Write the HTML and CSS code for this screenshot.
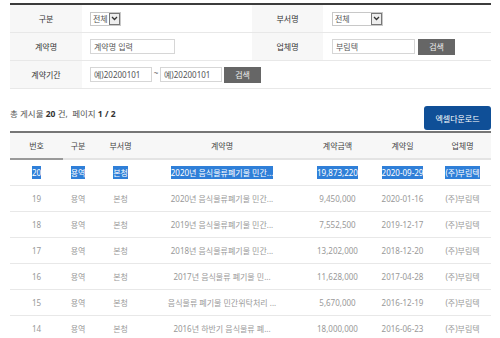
FILE: index.html
```html
<!DOCTYPE html>
<html lang="ko">
<head>
  <meta charset="UTF-8">
  <title>계약현황</title>
  <link rel="stylesheet" href="styles.css">
</head>
<body>
  <div id="contract-board">
    <table class="search">
      <colgroup>
        <col style="width:72px"><col style="width:170px"><col style="width:71px"><col style="width:168px">
      </colgroup>
      <tr>
        <th>구분</th>
        <td><span class="sel sel-s"><span class="sel-txt">전체</span><span class="sel-arr"><svg width="7" height="5" viewBox="0 0 7 5"><path d="M1 1 L3.5 3.5 L6 1" fill="none" stroke="#333" stroke-width="1.3"/></svg></span></span></td>
        <th>부서명</th>
        <td class="pad9"><span class="sel sel-l"><span class="sel-txt">전체</span><span class="sel-arr"><svg width="7" height="5" viewBox="0 0 7 5"><path d="M1 1 L3.5 3.5 L6 1" fill="none" stroke="#333" stroke-width="1.3"/></svg></span></span></td>
      </tr>
      <tr>
        <th>계약명</th>
        <td><input class="inp inp-name" type="text" value="계약명 입력"></td>
        <th>업체명</th>
        <td class="pad9"><input class="inp inp-comp" type="text" value="부림텍"><button class="btn-search">검색</button></td>
      </tr>
      <tr>
        <th>계약기간</th>
        <td colspan="3"><input class="inp inp-date" type="text" value="예)20200101"><span class="tilde">~</span><input class="inp inp-date" type="text" value="예)20200101"><button class="btn-search btn-date">검색</button></td>
      </tr>
    </table>

    <div class="list-top">
      <p class="count">총 게시물 <b>20</b> 건,&nbsp; 페이지 <b>1 / 2</b></p>
      <button class="btn-excel">엑셀다운로드</button>
    </div>

    <table class="list">
      <colgroup>
        <col style="width:53px"><col style="width:38px"><col style="width:39px"><col style="width:164px"><col style="width:67px"><col style="width:63px"><col style="width:57px">
      </colgroup>
      <thead>
        <tr>
          <th class="on">번호</th><th class="c2">구분</th><th>부서명</th><th>계약명</th><th>계약금액</th><th>계약일</th><th>업체명</th>
        </tr>
      </thead>
      <tbody>
        <tr class="picked">
          <td><span>20</span></td><td class="c2"><span>용역</span></td><td><span>본청</span></td><td><span>2020년 음식물류폐기물 민간...</span></td><td><span>19,873,220</span></td><td><span>2020-09-29</span></td><td><span>(주)부림텍</span></td>
        </tr>
        <tr>
          <td>19</td><td class="c2">용역</td><td>본청</td><td>2020년 음식물류폐기물 민간...</td><td>9,450,000</td><td>2020-01-16</td><td>(주)부림텍</td>
        </tr>
        <tr>
          <td>18</td><td class="c2">용역</td><td>본청</td><td>2019년 음식물류폐기물 민간...</td><td>7,552,500</td><td>2019-12-17</td><td>(주)부림텍</td>
        </tr>
        <tr>
          <td>17</td><td class="c2">용역</td><td>본청</td><td>2018년 음식물류폐기물 민간...</td><td>13,202,000</td><td>2018-12-20</td><td>(주)부림텍</td>
        </tr>
        <tr>
          <td>16</td><td class="c2">용역</td><td>본청</td><td>2017년 음식물류 폐기물 민...</td><td>11,628,000</td><td>2017-04-28</td><td>(주)부림텍</td>
        </tr>
        <tr>
          <td>15</td><td class="c2">용역</td><td>본청</td><td>음식물류 폐기물 민간위탁처리 ...</td><td>5,670,000</td><td>2016-12-19</td><td>(주)부림텍</td>
        </tr>
        <tr>
          <td>14</td><td class="c2">용역</td><td>본청</td><td>2016년 하반기 음식물류 폐...</td><td>18,000,000</td><td>2016-06-23</td><td>(주)부림텍</td>
        </tr>
      </tbody>
    </table>
  </div>
</body>
</html>
```

FILE: styles.css
```css
body {
    margin: 0;
    padding: 3px 9px 0 10px;
    font-family: "Noto Sans", "Noto Sans CJK KR", sans-serif;
    font-size: 8px;
    color: #555;
    background: #fff;
}
#contract-board {
    width: 481px;
}
table {
    border-collapse: collapse;
    table-layout: fixed;
    width: 481px;
}
.search {
    border-top: 2px solid #3c3c3c;
}
.search th {
    height: 27px;
    padding: 0;
    background: #f7f7f7;
    font-weight: normal;
    color: #333;
    border-bottom: 1px solid #e8e8e8;
}
.search td {
    padding: 0 0 0 8px;
    border-bottom: 1px solid #e8e8e8;
    white-space: nowrap;
}
.search td.pad9 {
    padding-left: 9px;
}
.sel {
    display: inline-flex;
    align-items: center;
    height: 14px;
    box-sizing: border-box;
    border: 1px solid #c8c8c8;
    background: #fff;
    vertical-align: middle;
}
.sel-s {
    width: 31px;
}
.sel-l {
    width: 51px;
}
.sel-txt {
    padding-left: 2px;
    color: #555;
}
.sel-arr {
    margin-left: auto;
    width: 11px;
    height: 12px;
    box-sizing: border-box;
    border: 1px solid #777;
    background: #eee;
    display: flex;
    align-items: center;
    justify-content: center;
}
.inp {
    height: 15px;
    box-sizing: border-box;
    border: 1px solid #d6d6d6;
    padding: 0 3px;
    font-family: inherit;
    font-size: 8px;
    color: #555;
    vertical-align: middle;
    outline: none;
}
.inp-name {
    width: 85px;
}
.inp-comp {
    width: 83px;
}
.inp-date {
    width: 62px;
}
.tilde {
    display: inline-block;
    width: 8px;
    text-align: center;
    vertical-align: middle;
    position: relative;
    top: -2px;
    color: #666;
}
.btn-search {
    height: 16px;
    width: 37px;
    margin-left: 3px;
    border: none;
    background: #666;
    color: #eee;
    font-family: inherit;
    font-size: 8px;
    padding: 0;
    vertical-align: middle;
}
.btn-date {
    margin-left: 2px;
}
.list-top {
    display: flex;
    justify-content: space-between;
    margin-top: 17px;
    height: 24px;
}
.count {
    margin: 0;
    padding-top: 1px;
    font-size: 8.5px;
    color: #555;
}
.count b {
    color: #333;
}
.btn-excel {
    width: 67px;
    height: 24px;
    border: none;
    border-radius: 3px;
    background: #0f4f97;
    color: #fff;
    font-family: inherit;
    font-size: 8px;
    padding: 0;
}
.list {
    margin-top: 1px;
    border-top: 2px solid #767676;
}
.list th {
    height: 25px;
    padding: 0;
    background: #f7f7f7;
    font-weight: normal;
    color: #444;
    border-bottom: 2px solid #e4e4e4;
}
.list th.on {
    border-bottom-color: #9a9a9a;
}
.list td {
    height: 25px;
    padding: 0;
    text-align: center;
    color: #999;
    border-bottom: 1px solid #e8e8e8;
    white-space: nowrap;
    overflow: hidden;
}
.list .c2 {
    padding-right: 8px;
}
.picked span {
    background: #2f7fd8;
    color: #fff;
    padding: 1px 0;
}
```
